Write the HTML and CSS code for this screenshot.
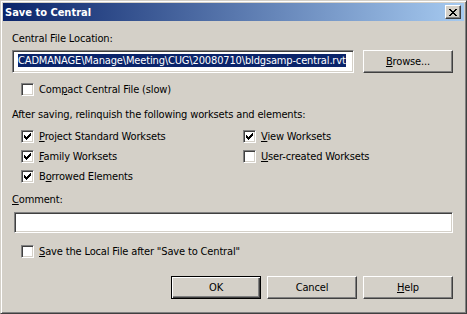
FILE: index.html
```html
<!DOCTYPE html>
<html lang="en">
<head>
    <meta charset="UTF-8">
    <title>Save to Central</title>
    <link rel="stylesheet" href="styles.css">
</head>
<body>
    <div class="window">
        <div class="titlebar">
            <span class="title">Save to Central</span>
            <button class="close" type="button">
                <svg width="8" height="7" viewBox="0 0 8 7" shape-rendering="crispEdges">
                    <path d="M0 0h2v1h-2zM6 0h2v1h-2zM1 1h2v1h-2zM5 1h2v1h-2zM2 2h4v1h-4zM3 3h2v1h-2zM2 4h4v1h-4zM1 5h2v1h-2zM5 5h2v1h-2zM0 6h2v1h-2zM6 6h2v1h-2z" fill="#000"/>
                </svg>
            </button>
        </div>

        <div class="content">
            <div class="label first">Central File Location:</div>
            <div class="file-row">
                <div class="field file-field">
                    <span class="selected">CADMANAGE\Manage\Meeting\CUG\20080710\bldgsamp-central.rvt</span>
                </div>
                <button class="btn" type="button"><u>B</u>rowse...</button>
            </div>

            <label class="check compact">
                <span class="box"></span>
                <span>Com<u>p</u>act Central File (slow)</span>
            </label>

            <div class="label after">After saving, relinquish the following worksets and elements:</div>
            <div class="check-grid">
                <label class="check"><span class="box on"></span><span><u>P</u>roject Standard Worksets</span></label>
                <label class="check"><span class="box on"></span><span><u>V</u>iew Worksets</span></label>
                <label class="check"><span class="box on"></span><span><u>F</u>amily Worksets</span></label>
                <label class="check"><span class="box"></span><span><u>U</u>ser-created Worksets</span></label>
                <label class="check"><span class="box on"></span><span>B<u>o</u>rrowed Elements</span></label>
            </div>

            <div class="label comment-label"><u>C</u>omment:</div>
            <div class="field comment-field"></div>

            <label class="check save-local">
                <span class="box"></span>
                <span><u>S</u>ave the Local File after "Save to Central"</span>
            </label>

            <div class="buttons">
                <button class="btn default" type="button">OK</button>
                <button class="btn" type="button">Cancel</button>
                <button class="btn" type="button"><u>H</u>elp</button>
            </div>
        </div>
    </div>
</body>
</html>
```

FILE: styles.css
```css
body {
    margin: 0;
    background-color: #d4d0c8;
    font-family: "DejaVu Sans Condensed", "DejaVu Sans", sans-serif;
    font-stretch: condensed;
    font-size: 11px;
    letter-spacing: -0.15px;
    color: #000;
}
.window {
    width: 467px;
    height: 314px;
    box-sizing: border-box;
    border: 1px solid;
    border-color: #d4d0c8 #404040 #404040 #d4d0c8;
    box-shadow: inset 1px 1px #fff, inset -1px -1px #808080;
    padding: 2px;
    background-color: #d4d0c8;
}
.titlebar {
    height: 18px;
    display: flex;
    align-items: center;
    justify-content: space-between;
    padding: 0 3px 0 2px;
    background: linear-gradient(to right, #0a246a, #a6caf0);
}
.title {
    color: #fff;
    font-family: "DejaVu Sans", sans-serif;
    font-stretch: condensed;
    font-weight: bold;
    font-size: 11px;
    letter-spacing: 0;
}
.close {
    width: 16px;
    height: 14px;
    padding: 0;
    border: 1px solid;
    border-color: #fff #404040 #404040 #fff;
    box-shadow: inset -1px -1px #808080;
    background-color: #d4d0c8;
    display: flex;
    align-items: center;
    justify-content: center;
}
.content {
    padding: 0 11px 0 9px;
}
.label {
    line-height: 13px;
}
.label.first {
    margin-top: 11px;
}
u {
    text-decoration-thickness: 1px;
    text-underline-offset: 1px;
}
.file-row {
    display: flex;
    gap: 9px;
    margin-top: 5px;
}
.field {
    box-sizing: border-box;
    background-color: #fff;
    border: 1px solid;
    border-color: #808080 #fff #fff #808080;
    box-shadow: inset 1px 1px #404040, inset -1px -1px #d4d0c8;
}
.file-field {
    width: 342px;
    height: 23px;
    padding: 3px 0 0 5px;
    overflow: hidden;
    white-space: nowrap;
}
.selected {
    display: inline-block;
    line-height: 13px;
    background-color: #0a246a;
    color: #fff;
}
.btn {
    width: 90px;
    height: 23px;
    padding: 0;
    font: inherit;
    letter-spacing: inherit;
    color: #000;
    background-color: #d4d0c8;
    border: 1px solid;
    border-color: #fff #404040 #404040 #fff;
    box-shadow: inset -1px -1px #808080;
}
.btn.default {
    border-color: #000;
    box-shadow: inset 1px 1px #fff, inset -1px -1px #404040, inset -2px -2px #808080;
}
.check {
    display: flex;
    align-items: center;
    gap: 5px;
    height: 13px;
    line-height: 13px;
    white-space: nowrap;
}
.box {
    width: 13px;
    height: 13px;
    box-sizing: border-box;
    flex: none;
    background-color: #fff;
    border: 1px solid;
    border-color: #808080 #fff #fff #808080;
    box-shadow: inset 1px 1px #404040, inset -1px -1px #d4d0c8;
    position: relative;
}
.box.on::after {
    content: "";
    position: absolute;
    left: 2px;
    top: 2px;
    width: 7px;
    height: 7px;
    background: url("data:image/svg+xml,%3Csvg xmlns='http://www.w3.org/2000/svg' width='7' height='7' shape-rendering='crispEdges'%3E%3Cpath d='M6 0h1v3h-1zM5 1h1v3h-1zM4 2h1v3h-1zM3 3h1v3h-1zM2 4h1v3h-1zM1 3h1v3h-1zM0 2h1v3h-1z' fill='%23000'/%3E%3C/svg%3E") no-repeat;
}
.compact {
    margin: 10px 0 0 9px;
}
.label.after {
    margin-top: 12px;
}
.check-grid {
    display: grid;
    grid-template-columns: 222px auto;
    row-gap: 7px;
    margin: 9px 0 0 9px;
}
.label.comment-label {
    margin-top: 10px;
}
.comment-field {
    height: 21px;
    margin: 6px 0 0 2px;
}
.save-local {
    margin: 12px 0 0 9px;
}
.buttons {
    display: flex;
    justify-content: flex-end;
    gap: 6px;
    margin-top: 18px;
}
```
